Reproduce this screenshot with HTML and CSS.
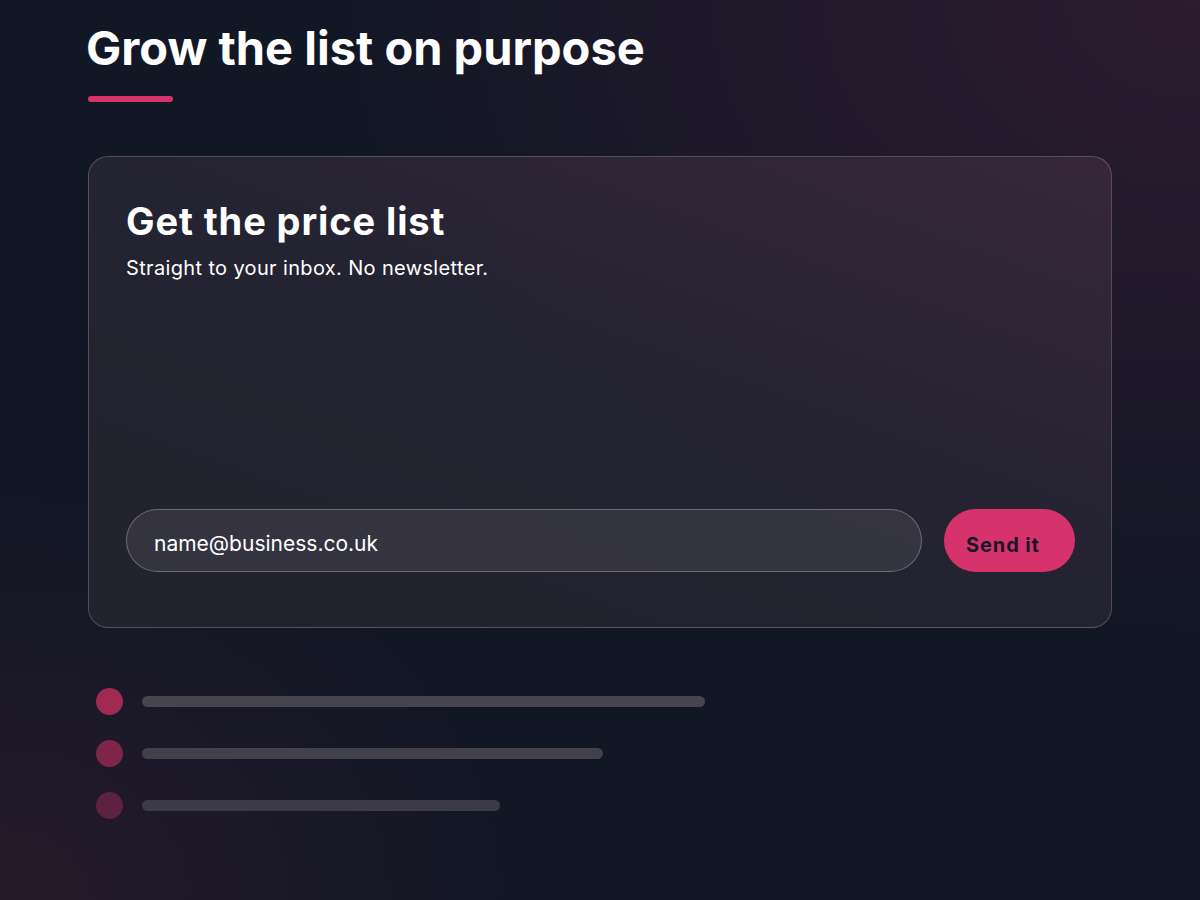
FILE: index.html
```html
<!DOCTYPE html>
<html lang="en">
<head>
<meta charset="utf-8">
<title>Grow the list on purpose</title>
<link rel="stylesheet" href="styles.css">
</head>
<body>
<main class="page">
  <header class="intro">
    <h1 class="intro-title">Grow the list on purpose</h1>
    <span class="intro-rule"></span>
  </header>

  <section class="card">
    <div class="card-head">
      <h2 class="card-title">Get the price list</h2>
      <p class="card-sub">Straight to your inbox. No newsletter.</p>
    </div>
    <form class="signup" onsubmit="return false">
      <input class="signup-input" type="email" value="name@business.co.uk" aria-label="Email">
      <button class="signup-btn" type="submit">Send it</button>
    </form>
  </section>

  <ul class="skeleton">
    <li class="skeleton-row"><span class="dot dot-1"></span><span class="bar bar-1" style="width:55%"></span></li>
    <li class="skeleton-row"><span class="dot dot-2"></span><span class="bar bar-2" style="width:45%"></span></li>
    <li class="skeleton-row"><span class="dot dot-3"></span><span class="bar bar-3" style="width:35%"></span></li>
  </ul>
</main>
</body>
</html>
```

FILE: styles.css
```css
* { box-sizing: border-box; }

html, body {
  margin: 0;
  height: 100%;
}

body {
  font-family: "Inter", "Noto Sans", "Liberation Sans", sans-serif;
  color: #ffffff;
  background-color: #121725;
  background-image:
    radial-gradient(ellipse 1150px 850px at 100% 0%, rgba(45, 27, 48, 1), rgba(45, 27, 48, 0.55) 35%, rgba(45, 27, 48, 0) 75%),
    radial-gradient(ellipse 650px 520px at 0% 100%, rgba(37, 26, 42, 1), rgba(37, 26, 42, 0) 80%);
  min-height: 900px;
}

.page {
  width: 1024px;
  margin: 0 auto;
  padding-top: 20px;
}

.intro {
  display: flex;
  flex-direction: column;
  align-items: flex-start;
}

.intro-title {
  margin: 0 0 0 -2px;
  font-size: 47px;
  line-height: 56px;
  font-weight: 700;
  letter-spacing: 0;
}

.intro-rule {
  display: block;
  width: 85px;
  height: 6px;
  border-radius: 3px;
  background: #d6336c;
  margin-top: 20px;
}

.card {
  margin-top: 54px;
  height: 472px;
  border: 1px solid rgba(255, 255, 255, 0.2);
  border-radius: 20px;
  background: linear-gradient(200deg, rgba(58, 40, 60, 0.9) 0%, rgba(40, 38, 52, 0.85) 45%, rgba(36, 36, 48, 0.9) 100%);
  padding: 42px 36px 55px 37px;
  display: flex;
  flex-direction: column;
  justify-content: space-between;
}

.card-title {
  margin: 0;
  font-size: 38px;
  line-height: 44px;
  font-weight: 700;
  letter-spacing: 0.9px;
}

.card-sub {
  margin: 12px 0 0;
  font-size: 20px;
  line-height: 26px;
  font-weight: 400;
  letter-spacing: 0.35px;
}

.signup {
  display: flex;
  gap: 22px;
  align-items: stretch;
}

.signup-input {
  flex: 1;
  height: 63px;
  border-radius: 32px;
  border: 1.5px solid rgba(255, 255, 255, 0.28);
  background: rgba(255, 255, 255, 0.08);
  color: #ffffff;
  font-family: inherit;
  font-size: 21px;
  padding: 6px 26px 0 27px;
  outline: none;
}

.signup-btn {
  flex: none;
  width: 131px;
  height: 63px;
  border: none;
  border-radius: 32px;
  background: #d6336c;
  color: #161827;
  font-family: inherit;
  font-size: 20px;
  font-weight: 700;
  letter-spacing: 0.9px;
  padding: 8px 0 0 22px;
  text-align: left;
  cursor: pointer;
}

.skeleton {
  list-style: none;
  margin: 60px 0 0;
  padding: 0;
  display: flex;
  flex-direction: column;
  gap: 25px;
}

.skeleton-row {
  display: flex;
  align-items: center;
}

.dot {
  flex: none;
  width: 27px;
  height: 27px;
  border-radius: 50%;
  margin: 0 19px 0 8px;
}

.dot-1 { background: #a22952; }
.dot-2 { background: #7e2549; }
.dot-3 { background: #5d2142; }

.bar {
  display: block;
  height: 11px;
  border-radius: 6px;
}

.bar-1 { background: #46454f; }
.bar-2 { background: #41404b; }
.bar-3 { background: #3b3a46; }
```
